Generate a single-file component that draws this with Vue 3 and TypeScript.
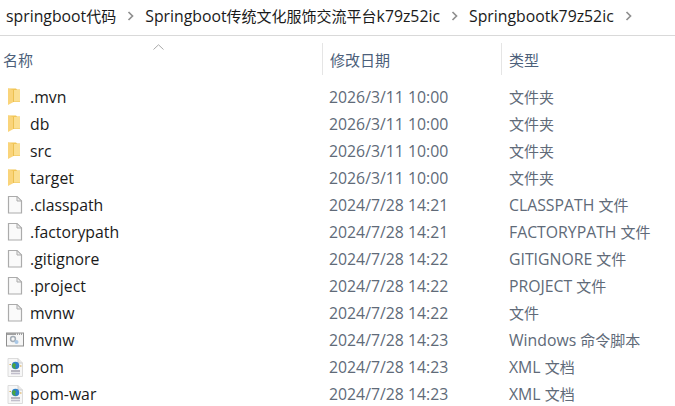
<script setup lang="ts">
import { h } from 'vue'

type Kind = 'folder' | 'file' | 'script' | 'xml'
interface Row { name: string; date: string; type: string; kind: Kind }
const crumbs = ['springboot代码', 'Springboot传统文化服饰交流平台k79z52ic', 'Springbootk79z52ic']
const rows: Row[] = [
  { name: '.mvn', date: '2026/3/11 10:00', type: '文件夹', kind: 'folder' },
  { name: 'db', date: '2026/3/11 10:00', type: '文件夹', kind: 'folder' },
  { name: 'src', date: '2026/3/11 10:00', type: '文件夹', kind: 'folder' },
  { name: 'target', date: '2026/3/11 10:00', type: '文件夹', kind: 'folder' },
  { name: '.classpath', date: '2024/7/28 14:21', type: 'CLASSPATH 文件', kind: 'file' },
  { name: '.factorypath', date: '2024/7/28 14:21', type: 'FACTORYPATH 文件', kind: 'file' },
  { name: '.gitignore', date: '2024/7/28 14:22', type: 'GITIGNORE 文件', kind: 'file' },
  { name: '.project', date: '2024/7/28 14:22', type: 'PROJECT 文件', kind: 'file' },
  { name: 'mvnw', date: '2024/7/28 14:22', type: '文件', kind: 'file' },
  { name: 'mvnw', date: '2024/7/28 14:23', type: 'Windows 命令脚本', kind: 'script' },
  { name: 'pom', date: '2024/7/28 14:23', type: 'XML 文档', kind: 'xml' },
  { name: 'pom-war', date: '2024/7/28 14:23', type: 'XML 文档', kind: 'xml' },
]

// Chinese runs are set slightly smaller than the Latin text around them.
const Mixed = (props: { text: string }) =>
  (props.text.match(/[\u4e00-\u9fff]+|[^\u4e00-\u9fff]+/g) ?? []).map((part) =>
    h('span', { class: /[\u4e00-\u9fff]/.test(part) ? 'cjk' : undefined }, part),
  )
Mixed.props = ['text']
</script>

<template>
  <div class="window">
    <nav class="crumbs">
      <template v-for="c in crumbs" :key="c">
        <span class="crumb"><Mixed :text="c" /></span>
        <svg class="chev" width="7" height="10" viewBox="0 0 7 10"><path d="M1.5 1 L5.5 5 L1.5 9" fill="none" stroke="#8f8f8f" stroke-width="1.7" /></svg>
      </template>
    </nav>
    <div class="head">
      <svg class="sort" width="11" height="6" viewBox="0 0 11 6"><path d="M.5 5.5 L5.5 .8 L10.5 5.5" fill="none" stroke="#a8a8a8" stroke-width="1" /></svg>
      <div class="hcell c1"><Mixed text="名称" /></div>
      <div class="hcell c2"><Mixed text="修改日期" /></div>
      <div class="hcell c3"><Mixed text="类型" /></div>
    </div>
    <div class="list">
      <div v-for="(r, i) in rows" :key="i" class="row">
        <div class="c1 namecell">
          <svg v-if="r.kind === 'folder'" class="ico" width="18" height="18" viewBox="0 0 18 18">
            <path d="M3 .5 H11 L12 1.5 H15 V14 H3 Z" fill="#f2c555" />
            <path d="M9 2 H15 V13.5 H9 Z" fill="#fbdf92" />
            <path d="M3 .5 L8.5 2 V14 L3 17 Z" fill="#fad47a" />
            <path d="M8.5 2 V14" stroke="#e9bc4c" stroke-width=".8" />
          </svg>
          <svg v-else-if="r.kind === 'file'" class="ico" width="18" height="18" viewBox="0 0 18 18">
            <path d="M3.5 .5 H12 L16.5 5 V17 H3.5 Z" fill="#fafafa" stroke="#ababab" stroke-width="1.2" />
            <path d="M12 .5 V5 H16.5 Z" fill="#eeeeee" stroke="#ababab" />
          </svg>
          <svg v-else-if="r.kind === 'script'" class="ico" width="18" height="18" viewBox="0 0 18 18">
            <rect x="1.5" y="2" width="17" height="13" fill="#f6f6f6" stroke="#8f8f8f" />
            <path d="M2 3 H18" stroke="#a0a0a0" stroke-width="2" stroke-dasharray="9 1 1 1 1 1 1 1" />
            <circle cx="8" cy="8" r="2.4" fill="none" stroke="#a3acb5" stroke-width="1.5" />
            <circle cx="11.5" cy="11" r="2" fill="#a9c7e6" />
          </svg>
          <svg v-else class="ico" width="18" height="18" viewBox="0 0 18 18">
            <path d="M3 .5 H13 L17.5 5 V18.5 H3 Z" fill="#f7f7f7" stroke="#dcdcdc" />
            <path d="M13 .5 V5 H17.5" fill="#e8e8e8" stroke="#d0d0d0" />
            <path d="M6 13 H15" stroke="#9d9aa8" stroke-width="1.4" />
            <path d="M6 15.5 H15" stroke="#c2bfcc" stroke-width="1.6" />
            <circle cx="10.5" cy="7.5" r="3.8" fill="#2e7fc9" />
            <path d="M8.5 5 C10.5 5.5 12 6.5 10 8.5 L11 11 C8.5 10.5 7 9 7 7.5 Z" fill="#4ba53f" />
            <path d="M4.5 6.5 H6 M15 8 H16.5" stroke="#d9a441" stroke-width="1" />
          </svg>
          <span class="name">{{ r.name }}</span>
        </div>
        <div class="c2 muted">{{ r.date }}</div>
        <div class="c3 muted"><Mixed :text="r.type" /></div>
      </div>
    </div>
  </div>
</template>

<style scoped>
.window {
  width: 675px;
  height: 406px;
  overflow: hidden;
  background: #fff;
  font-family: "Open Sans", "Noto Sans CJK SC", sans-serif;
  font-size: 15.8px;
  color: #1a1a1a;
}
.crumbs {
  height: 36px;
  box-sizing: border-box;
  border-bottom: 1px solid #d9d9d9;
  display: flex;
  align-items: center;
  padding: 0 0 3px 6px;
  white-space: nowrap;
}
.chev { margin: 0 11px 0 11px; flex: none; }
.head {
  position: relative;
  height: 45px;
  display: flex;
  align-items: flex-start;
  color: #4c607a;
}
.sort { position: absolute; left: 153px; top: 8px; }
.hcell { height: 32px; display: flex; align-items: center; margin-top: 7px; }
.c1 { width: 322px; padding-left: 3px; box-sizing: border-box; flex: none; }
.c2 { width: 179px; padding-left: 7px; box-sizing: border-box; flex: none; }
.c3 { flex: 1; padding-left: 8px; }
.hcell.c2, .hcell.c3 { border-left: 1px solid #e5e5e5; }
.hcell.c3 { padding-left: 7px; }
.list { padding-top: 2px; }
.row {
  height: 27px;
  display: flex;
  align-items: center;
  white-space: nowrap;
}
.namecell { display: flex; align-items: center; padding-left: 5px; }
.ico { flex: none; margin-right: 7px; overflow: visible; }
.muted { color: #606a78; }
</style>

<style>
.cjk { font-size: 15px; }
</style>
